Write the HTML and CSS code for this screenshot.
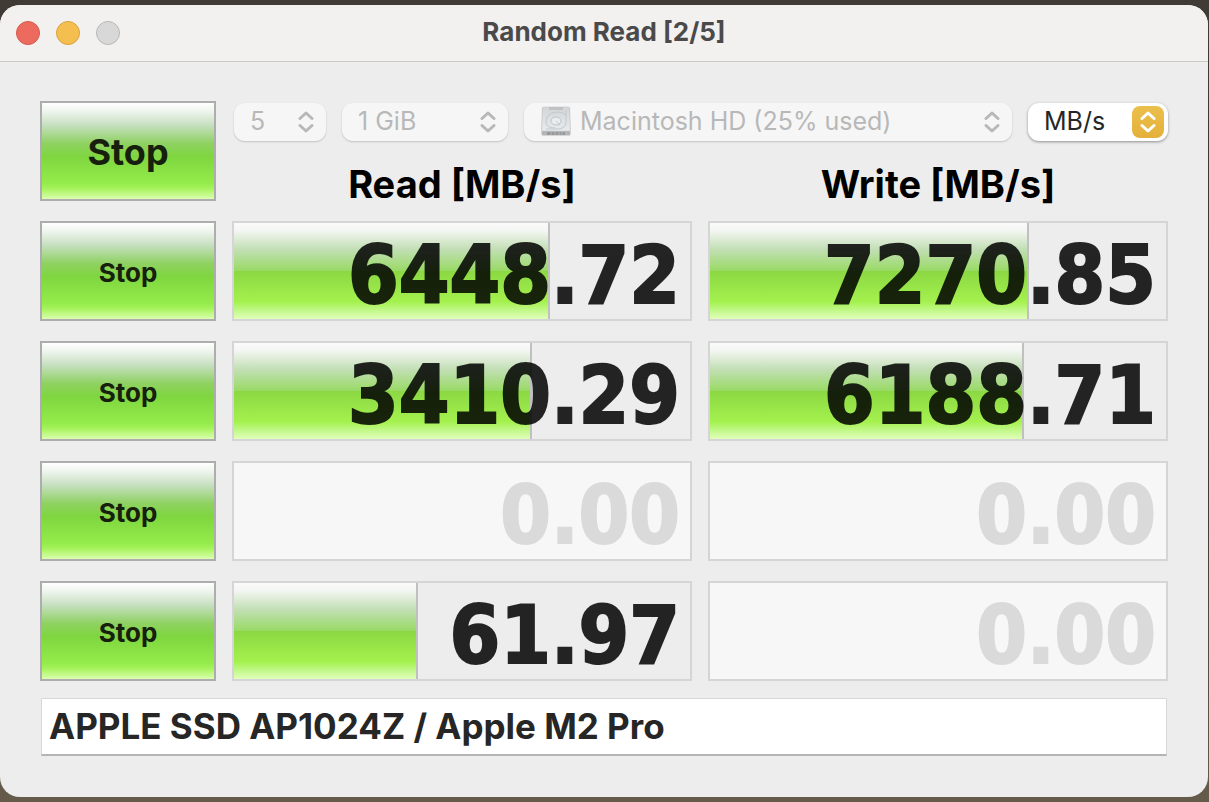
FILE: index.html
```
<!DOCTYPE html>
<html lang="en">
<head>
<meta charset="utf-8">
<title>Random Read [2/5]</title>
<link rel="stylesheet" href="styles.css">
</head>
<body>
<svg class="defs" aria-hidden="true">
  <symbol id="chevrons" viewBox="0 0 16 24">
    <path d="M2 8.500 8 3 14 8.500M2 15.500 8 21 14 15.500" fill="none" stroke="currentColor" stroke-width="3" stroke-linecap="round" stroke-linejoin="round"/>
  </symbol>
</svg>
<main class="window">
  <header class="titlebar">
    <div class="lights">
      <button class="light close" aria-label="Close"></button>
      <button class="light minimize" aria-label="Minimize"></button>
      <button class="light zoom" aria-label="Zoom" disabled></button>
    </div>
    <h1 class="title">Random Read [2/5]</h1>
  </header>
  <div class="content">
    <div class="grid">
      <button class="stop stop-all">Stop</button>
      <div class="top">
        <div class="options">
          <div class="picker count">
            <select aria-label="Test count" disabled><option>5</option></select>
            <svg class="arrows"><use href="#chevrons"/></svg>
          </div>
          <div class="picker size">
            <select aria-label="Test size" disabled><option>1 GiB</option></select>
            <svg class="arrows"><use href="#chevrons"/></svg>
          </div>
          <div class="picker drive">
            <svg class="disk" viewBox="0 0 32 32" aria-hidden="true">
              <defs>
                <linearGradient id="plate" x1="0" y1="0" x2="0" y2="1"><stop offset="0" stop-color="#d3d5d6"/><stop offset="1" stop-color="#e6ebee"/></linearGradient>
              </defs>
              <path d="M4 2h24q1.500 0 1.700 1L30.500 25v4q0 1.500-1.500 1.500h-26Q1.500 30.500 1.500 29V25L2.300 3q.2-1 1.700-1z" fill="#b4b5b6"/>
              <path d="M4 2h24q1.500 0 1.700 1L30.300 26H1.700L2.300 3q.2-1 1.700-1z" fill="url(#plate)" stroke="#c4c7c9" stroke-width=".6"/>
              <path d="M9 2h14v3H9z" fill="#bfc1c2"/>
              <path d="M26 5v12q0 7-9 7H6M26 10Q23 7 17 7 6 8 6 17q0 6 9 6" fill="none" stroke="#c3c8cb"/>
              <ellipse cx="16" cy="16" rx="5" ry="4" fill="#e9edef" stroke="#bfc4c7"/>
              <path d="M16 16l4 4" stroke="#c3c8cb"/>
              <path d="M7 27h18v3H7z" fill="#97999a"/><path d="M11 27v3m4-3v3m4-3v3m3-3v3" stroke="#b4b5b6"/>
            </svg>
            <select aria-label="Drive" disabled><option>Macintosh HD (25% used)</option></select>
            <svg class="arrows"><use href="#chevrons"/></svg>
          </div>
          <div class="picker unit">
            <select aria-label="Unit"><option>MB/s</option></select>
            <span class="cap"><svg class="arrows"><use href="#chevrons"/></svg></span>
          </div>
        </div>
        <div class="heads">
          <h2>Read [MB/s]</h2>
          <h2>Write [MB/s]</h2>
        </div>
      </div>

      <button class="stop">Stop</button>
      <div class="meter"><div class="fill" style="width:69.3%"></div><output>6448.72</output></div>
      <div class="meter"><div class="fill" style="width:70%"></div><output>7270.85</output></div>

      <button class="stop">Stop</button>
      <div class="meter"><div class="fill" style="width:65.4%"></div><output>3410.29</output></div>
      <div class="meter"><div class="fill" style="width:68.9%"></div><output>6188.71</output></div>

      <button class="stop">Stop</button>
      <div class="meter idle"><output>0.00</output></div>
      <div class="meter idle"><output>0.00</output></div>

      <button class="stop">Stop</button>
      <div class="meter"><div class="fill" style="width:40.4%"></div><output>61.97</output></div>
      <div class="meter idle"><output>0.00</output></div>
    </div>
    <input class="comment" type="text" aria-label="Comment" value="APPLE SSD AP1024Z / Apple M2 Pro">
  </div>
</main>
</body>
</html>
```
FILE: styles.css
```
* { box-sizing: border-box; }
body {
  margin: 0;
  min-height: 100vh;
  padding: 5px 1px 5px 0;
  display: flex;
  background: linear-gradient(#403b35, #37322d 50%, #665b4b);
  font-family: Inter, "Liberation Sans", sans-serif;
  color: #262626;
}
.defs { position: absolute; width: 0; height: 0; }
button, select, input { font: inherit; color: inherit; margin: 0; }
.window {
  flex: 1;
  min-width: 0;
  display: flex;
  flex-direction: column;
  background: #ededed;
  border-radius: 20px;
  overflow: hidden;
}
.titlebar {
  display: grid;
  grid-template-columns: 1fr auto 1fr;
  align-items: center;
  height: 57px;
  padding: 0 16px;
  background: #f2f1f0;
  border-bottom: 1px solid #c9c9c9;
}
.lights { display: flex; gap: 16px; }
.light {
  width: 24px;
  height: 24px;
  padding: 0;
  border: 1px solid #d35a4e;
  border-radius: 50%;
  background: #ed6a5e;
}
.minimize { background: #f5bf4f; border-color: #d8a13d; }
.zoom { background: #d8d8d8; border-color: #b8b8b8; }
.title { margin: 0; padding-bottom: 2px; font-size: 26px; line-height: 32px; font-weight: 700; color: #4a4a4a; }
.content { padding: 39px 40px 40px; }
.grid {
  display: grid;
  grid-template-columns: 176px 1fr 1fr;
  grid-auto-rows: 100px;
  gap: 20px 16px;
}
.stop {
  padding: 2px 0 0;
  border: 2px solid #adadad;
  background: linear-gradient(#ffffff, #f0f5ef 8%, #c6e0c0 23%, #8fd162 42%, #7fd640 56%, #93ec4a 83%, #a5f35b 89%, #dcffae);
  font-size: 26px;
  font-weight: 700;
  color: #16200d;
}
.stop-all { font-size: 36px; }
.top { grid-column: 2 / 4; }
.options { display: flex; gap: 16px; padding: 2px 0 0 2px; }
.picker { position: relative; height: 38px; font-size: 25px; color: #b8b8b8; }
.picker select {
  appearance: none;
  width: 100%;
  height: 38px;
  padding: 0 16px 2px;
  border: 0;
  border-radius: 11px;
  background: #f6f6f6;
  box-shadow: 0 1px 2px #0000002e;
  opacity: 1;
}
.count { width: 92px; }
.size { width: 166px; }
.drive { flex: 1; }
.unit { width: 140px; }
.drive select { padding-left: 56px; }
.unit select { background: #fff; color: #262626; box-shadow: 0 1px 3px #00000066; }
.arrows { position: absolute; right: 12px; top: 7px; width: 16px; height: 24px; pointer-events: none; }
.disk { position: absolute; left: 16px; top: 2px; width: 32px; height: 32px; }
.cap {
  position: absolute;
  top: 3px;
  right: 4px;
  width: 32px;
  height: 32px;
  border-radius: 8px;
  background: linear-gradient(#ebbf4c, #e4b03a);
  color: #fff;
  pointer-events: none;
}
.cap .arrows { right: 8px; top: 4px; }
.heads { display: grid; grid-template-columns: 1fr 1fr; gap: 16px; padding-top: 16px; }
.heads h2 { margin: 0; font-size: 38px; line-height: 54px; font-weight: 700; text-align: center; color: #000; }
.meter {
  position: relative;
  display: flex;
  align-items: center;
  justify-content: flex-end;
  border: 2px solid #d5d5d5;
  padding: 8px 10px 0 0;
}
.meter output {
  position: relative;
  font: bold 81px/88px "DejaVu Sans Condensed", "DejaVu Sans", sans-serif;
  color: #000;
  -webkit-text-stroke: 2px #000;
  opacity: .85;
}
.fill {
  position: absolute;
  inset: 0 auto 0 0;
  border-right: 2px solid #c0c0c0;
  background: linear-gradient(#fafafa, #f3f6f2 8%, #c3dfb6 27%, #98da64 50%, #8bd843 50%, #a4f14e 82%, #c2f889 91%, #e0ffba);
}
.idle { background: #f7f7f7; }
.meter.idle output { color: #dadada; -webkit-text-stroke-color: #dadada; opacity: 1; }
.comment {
  display: block;
  width: calc(100% - 2px);
  height: 58px;
  margin: 17px 1px 0;
  padding: 0 7px 2px;
  border: 1px solid #d8d8d8;
  border-bottom: 2px solid #b5b5b5;
  border-radius: 0;
  background: #fff;
  font-size: 35px;
  font-weight: 700;
}
```
